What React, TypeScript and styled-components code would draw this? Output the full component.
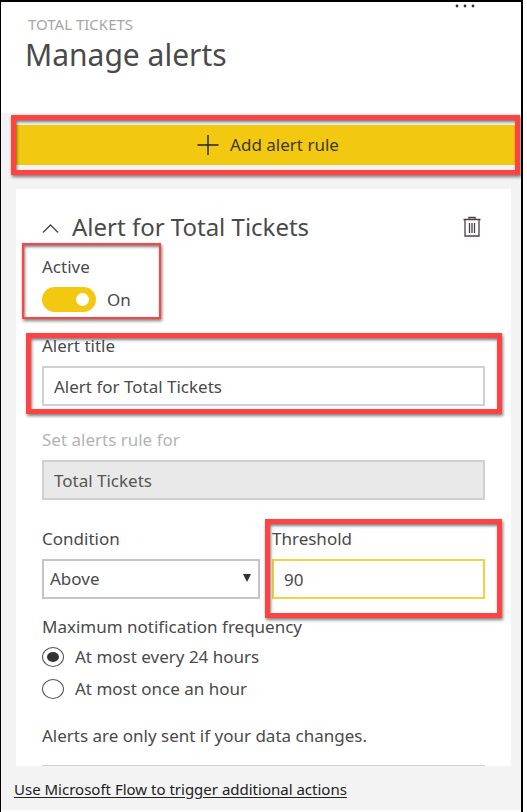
import React, { useState } from 'react';
import styled, { createGlobalStyle } from 'styled-components';

const GlobalStyle = createGlobalStyle`
  *, *::before, *::after { box-sizing: border-box; }
  body {
    margin: 0;
    background: #fff;
    color: #4a4a4a;
    font-family: "Noto Sans", "Open Sans", sans-serif;
    font-size: 17px;
    line-height: 24px;
  }
  button, input, select { font: inherit; color: inherit; }
`;

const Panel = styled.main`
  display: flex;
  flex-direction: column;
  min-height: 100vh;
  margin-right: 4px;
  border: solid #000;
  border-width: 2px 2px 0 1px;
  background: #fff;
`;

const Header = styled.header`
  display: flex;
  flex-direction: column;
  padding: 0 24px 38px;
`;

const MoreButton = styled.button`
  display: flex;
  align-self: flex-end;
  height: 12px;
  margin-right: 22px;
  padding: 2px 0 0;
  border: 0;
  background: none;
`;

const Eyebrow = styled.p`
  margin: 0 3px;
  color: #a6a6a6;
  font-size: 15px;
  line-height: 21px;
`;

const PageTitle = styled.h1`
  margin: 0;
  font-size: 30px;
  font-weight: 400;
  line-height: 40px;
`;

const Content = styled.div`
  padding: 12px 0 0;
  background: #f3f3f3;
`;

const Marked = styled.div`
  position: relative;
`;

const Marker = styled.span<{ $inset: string; $line?: number; $width?: string }>`
  position: absolute;
  inset: ${(p) => p.$inset};
  width: ${(p) => p.$width ?? 'auto'};
  border: ${(p) => p.$line ?? 5}px solid #ff4343;
  box-shadow: 1px 2px 3px rgba(0, 0, 0, 0.5), inset 1px 2px 3px rgba(0, 0, 0, 0.5);
  pointer-events: none;
`;

const AddButton = styled.button`
  display: flex;
  align-items: center;
  justify-content: center;
  gap: 11px;
  width: 100%;
  height: 40px;
  padding: 0 0 0 5px;
  border: 0;
  background: #f2c811;
  color: #3d3923;
`;

const AddBar = styled(Marked)`
  margin: 0 1px 24px 10px;
`;

const Card = styled.section`
  margin: 0 10px 0 15px;
  padding: 20px 26px 0;
  background: #fff;
`;

const CardHeader = styled.div`
  display: flex;
  align-items: center;
  justify-content: space-between;
  height: 36px;
  margin-bottom: 10px;
`;

const CardTitle = styled.h2`
  margin: 0;
  font-size: 24px;
  font-weight: 400;
  line-height: 36px;
`;

const CollapseButton = styled.button`
  display: flex;
  align-items: center;
  gap: 13px;
  padding: 0;
  border: 0;
  background: none;
`;

const IconButton = styled.button`
  display: flex;
  padding: 0 4px 0 0;
  border: 0;
  background: none;
`;

const Field = styled(Marked)<{ $gap: number }>`
  display: flex;
  flex-direction: column;
  gap: 8px;
  margin-bottom: ${(p) => p.$gap}px;
`;

const Label = styled.label<{ $muted?: boolean }>`
  color: ${(p) => (p.$muted ? '#b3b3b3' : 'inherit')};
`;

const Caption = styled.span``;

const TextBox = styled.input<{ $accent?: boolean }>`
  width: 100%;
  height: 40px;
  padding: 0 10px;
  border: 2px solid ${(p) => (p.$accent ? '#f2d143' : '#d0d0d0')};
  border-radius: 0;
  outline: 0;
  background: #fff;

  &:disabled {
    background: #e9e9e9;
    color: #555;
  }
`;

const ToggleRow = styled.label`
  display: flex;
  align-items: center;
  gap: 11px;
  height: 25px;
`;

const Toggle = styled.input`
  display: flex;
  align-items: center;
  justify-content: flex-start;
  appearance: none;
  width: 54px;
  height: 25px;
  margin: 0;
  padding: 0 7px;
  border-radius: 13px;
  background: #a6a6a6;

  &::before {
    content: '';
    width: 13px;
    height: 13px;
    border-radius: 50%;
    background: #fff;
  }

  &:checked {
    justify-content: flex-end;
    background: #f2c811;
  }
`;

const Columns = styled.div`
  display: grid;
  grid-template-columns: 218fr 213fr;
  column-gap: 12px;
`;

const SelectWrap = styled.div`
  position: relative;

  svg {
    position: absolute;
    top: 15px;
    right: 9px;
    pointer-events: none;
  }
`;

const Select = styled.select`
  display: block;
  appearance: none;
  width: 100%;
  height: 40px;
  padding: 0 24px 0 6px;
  border: 2px solid #c4c4c4;
  border-radius: 0;
  background: #fff;
`;

const RadioGroup = styled.fieldset`
  margin: 0 0 19px;
  padding: 0;
  border: 0;

  legend {
    padding: 0 0 2px;
  }
`;

const RadioRow = styled.label`
  display: flex;
  align-items: center;
  gap: 11px;
  height: 32px;
`;

const Radio = styled.input`
  display: grid;
  place-items: center;
  appearance: none;
  width: 22px;
  height: 20px;
  margin: 0;
  border: 1px solid #555;
  border-radius: 50%;

  &:checked::before {
    content: '';
    width: 12px;
    height: 10px;
    border-radius: 50%;
    background: #333;
  }
`;

const Note = styled.p`
  margin: 0;
  padding-bottom: 17px;
  border-bottom: 1px solid #d0d0d0;
`;

const Footer = styled.footer`
  display: flex;
  align-items: center;
  height: 44px;
  padding: 2px 13px 0;
`;

const FlowLink = styled.a`
  color: #222;
  font-size: 15px;
  text-underline-offset: 2px;
`;

const frequencies = ['At most every 24 hours', 'At most once an hour'];

export default function App() {
  const [active, setActive] = useState(true);
  const [title, setTitle] = useState('Alert for Total Tickets');
  const [threshold, setThreshold] = useState('90');
  const [frequency, setFrequency] = useState(frequencies[0]);

  return (
    <>
      <GlobalStyle />
      <Panel>
        <Header>
          <MoreButton type="button" aria-label="More options">
            <svg width="20" height="4" fill="#333">
              <circle cx="2" cy="2" r="1.4" />
              <circle cx="10" cy="2" r="1.4" />
              <circle cx="18" cy="2" r="1.4" />
            </svg>
          </MoreButton>
          <Eyebrow>TOTAL TICKETS</Eyebrow>
          <PageTitle>Manage alerts</PageTitle>
        </Header>
        <Content>
          <AddBar>
            <AddButton type="button">
              <svg width="22" height="20" fill="none" stroke="#222" strokeWidth="1.4">
                <path d="M0.5 10H21.5M11 0V20" />
              </svg>
              Add alert rule
            </AddButton>
            <Marker $inset="-10px 0 -10px 0" />
          </AddBar>
          <Card>
            <CardHeader>
              <CardTitle>
                <CollapseButton type="button" aria-expanded="true">
                  <svg width="17" height="12" fill="none" stroke="#444" strokeWidth="1.3">
                    <path d="M1 11.5L8.5 4L16 11.5" />
                  </svg>
                  Alert for Total Tickets
                </CollapseButton>
              </CardTitle>
              <IconButton type="button" aria-label="Delete alert">
                <svg width="18" height="22" fill="none" stroke="#4a4048" strokeWidth="1.3">
                  <path d="M0.5 3.5H17.5M2 3.5V20H16V3.5M6 3.5V1.5H12V3.5" />
                  <path d="M6.5 7V17M9 7V17M11.5 7V17" />
                </svg>
              </IconButton>
            </CardHeader>
            <Field $gap={22}>
              <Caption id="active-caption">Active</Caption>
              <ToggleRow>
                <Toggle
                  type="checkbox"
                  role="switch"
                  aria-describedby="active-caption"
                  checked={active}
                  onChange={(e) => setActive(e.target.checked)}
                />
                {active ? 'On' : 'Off'}
              </ToggleRow>
              <Marker $inset="-12px auto -7px -20px" $width="139px" $line={2} />
            </Field>
            <Field $gap={22}>
              <Label htmlFor="title">Alert title</Label>
              <TextBox id="title" value={title} onChange={(e) => setTitle(e.target.value)} />
              <Marker $inset="-1px -17px -8px -16px" />
            </Field>
            <Field $gap={27}>
              <Label htmlFor="rule" $muted>Set alerts rule for</Label>
              <TextBox id="rule" value="Total Tickets" disabled readOnly />
            </Field>
            <Columns>
              <Field $gap={16}>
                <Label htmlFor="condition">Condition</Label>
                <SelectWrap>
                  <Select id="condition" defaultValue="Above">
                    <option>Above</option>
                    <option>Below</option>
                  </Select>
                  <svg width="8" height="8" fill="#333">
                    <path d="M0 0H8L4 8Z" />
                  </svg>
                </SelectWrap>
              </Field>
              <Field $gap={16}>
                <Label htmlFor="threshold">Threshold</Label>
                <TextBox id="threshold" $accent value={threshold} onChange={(e) => setThreshold(e.target.value)} />
                <Marker $inset="-8px -17px -19px -7px" />
              </Field>
            </Columns>
            <RadioGroup>
              <legend>Maximum notification frequency</legend>
              {frequencies.map((item) => (
                <RadioRow key={item}>
                  <Radio type="radio" name="frequency" checked={frequency === item} onChange={() => setFrequency(item)} />
                  {item}
                </RadioRow>
              ))}
            </RadioGroup>
            <Note>Alerts are only sent if your data changes.</Note>
          </Card>
          <Footer>
            <FlowLink href="#flow">Use Microsoft Flow to trigger additional actions</FlowLink>
          </Footer>
        </Content>
      </Panel>
    </>
  );
}
